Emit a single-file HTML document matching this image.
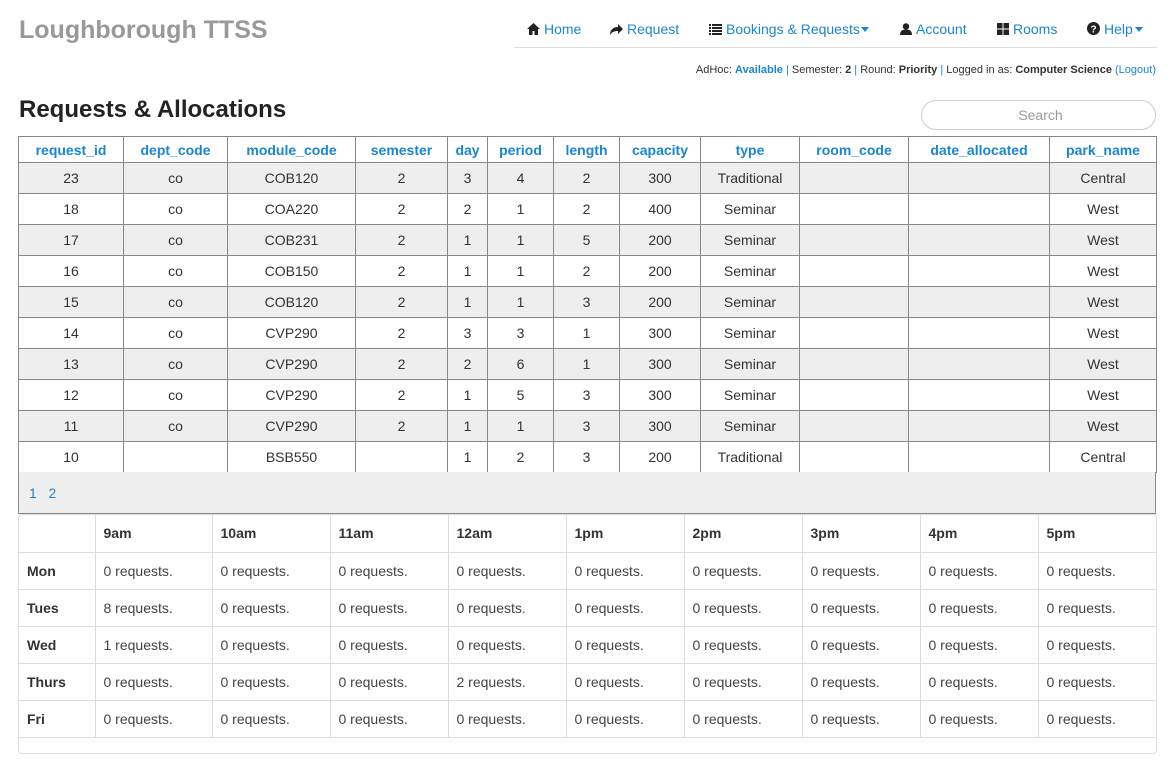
<!DOCTYPE html>
<html><head><meta charset="utf-8"><style>
*{box-sizing:border-box;margin:0;padding:0}
body{width:1173px;height:764px;background:#fff;font-family:"Liberation Sans",sans-serif;font-size:14px;color:#333;position:relative;overflow:hidden}
.brand{position:absolute;left:19px;top:16px;font-size:25px;font-weight:bold;color:#999}
.nav{position:absolute;left:514px;top:0;width:643px;height:48px;border-bottom:1px solid #e0e0e0}
.nav a{position:absolute;top:21px;color:#1a86cf;font-size:14px;text-decoration:none;white-space:nowrap}
.nav svg{vertical-align:-1px;margin-right:4px}
.info{position:absolute;right:17px;top:64px;font-size:11px;color:#333}
.info b{color:#333}.info .bl{color:#1a86cf;font-weight:bold}.info .l{color:#1a86cf}
h1{position:absolute;left:19px;top:96px;font-size:24px;font-weight:bold;color:#222}
.search{position:absolute;left:921px;top:100px;width:235px;height:30px;border:1px solid #ccc;border-radius:15px;color:#999;font-size:14px;line-height:28px;text-align:center;padding-left:4px}
table{border-collapse:collapse;table-layout:fixed;position:absolute;left:18px}
#t1{top:136px;width:1138px}
#t1 td,#t1 th{border:1px solid #888;text-align:center;height:31px;font-size:14px;padding:0}
#t1 th{height:26px;color:#1a86cf;font-weight:bold}
#t1 tr.g td{background:#eee}
.pag{position:absolute;left:18px;top:472px;width:1138px;height:42px;background:#eee;border:1px solid #888;border-top:none;padding:13px 0 0 10px;color:#1a86cf;font-size:14px}
.t2w{position:absolute;left:18px;top:514px;width:1139px;height:240px;border:1px solid #ddd;border-radius:4px;overflow:hidden}
#t2{position:static;width:1138px}
#t2 td,#t2 th{border-right:1px solid #ddd;border-bottom:1px solid #ddd;height:37px;text-align:left;padding:0 0 0 8px;font-size:14px;font-weight:normal;color:#444}
#t2 th{font-weight:bold;color:#333}
#t2 td.d{font-weight:bold;color:#333}
#t2 tr>*:last-child{border-right:none}
</style></head><body>
<div class="brand">Loughborough TTSS</div>
<div class="nav">
<a style="left:13px"><svg width="13" height="12" viewBox="0 0 13 12"><path d="M6.5 0L0 6h2v6h3.5V8h2v4H11V6h2z" fill="#222"/></svg>Home</a>
<a style="left:96px"><svg width="13" height="11" viewBox="0 0 13 11"><path d="M8 0v3C3 3 0 6 0 11c2-3 4-4 8-4v3l5-5z" fill="#222"/></svg>Request</a>
<a style="left:195px"><svg width="13" height="11" viewBox="0 0 13 11" fill="#222"><rect x="0" y="0" width="2" height="2"/><rect x="3" y="0" width="10" height="2"/><rect x="0" y="3" width="2" height="2"/><rect x="3" y="3" width="10" height="2"/><rect x="0" y="6" width="2" height="2"/><rect x="3" y="6" width="10" height="2"/><rect x="0" y="9" width="2" height="2"/><rect x="3" y="9" width="10" height="2"/></svg>Bookings &amp; Requests<svg width="8" height="5" viewBox="0 0 8 5" style="margin-left:1px;vertical-align:2px"><path d="M0 0h8L4 5z" fill="#1a86cf"/></svg></a>
<a style="left:386px"><svg width="12" height="12" viewBox="0 0 12 12"><circle cx="6" cy="3.5" r="3.2" fill="#222"/><path d="M0 12c0-4 2-5.5 6-5.5s6 1.5 6 5.5z" fill="#222"/></svg>Account</a>
<a style="left:483px"><svg width="12" height="12" viewBox="0 0 12 12" fill="#222"><rect width="5.5" height="5.5"/><rect x="6.5" width="5.5" height="5.5"/><rect y="6.5" width="5.5" height="5.5"/><rect x="6.5" y="6.5" width="5.5" height="5.5"/></svg>Rooms</a>
<a style="left:573px"><svg width="13" height="13" viewBox="0 0 13 13"><circle cx="6.5" cy="6.5" r="6.5" fill="#222"/><text x="6.5" y="10.5" font-size="10" font-weight="bold" fill="#fff" text-anchor="middle" font-family="Liberation Sans">?</text></svg>Help<svg width="8" height="5" viewBox="0 0 8 5" style="margin-left:2px;vertical-align:2px"><path d="M0 0h8L4 5z" fill="#1a86cf"/></svg></a>
</div>
<div class="info">AdHoc: <span class="bl">Available</span> <span class="l">|</span> Semester: <b>2</b> <span class="l">|</span> Round: <b>Priority</b> <span class="l">|</span> Logged in as: <b>Computer Science</b> <span class="l">(Logout)</span></div>
<h1>Requests &amp; Allocations</h1>
<div class="search">Search</div>
<table id="t1">
<colgroup><col style="width:105px"><col style="width:104px"><col style="width:128px"><col style="width:92px"><col style="width:40px"><col style="width:66px"><col style="width:66px"><col style="width:81px"><col style="width:99px"><col style="width:109px"><col style="width:141px"><col style="width:107px"></colgroup>
<tr><th>request_id</th><th>dept_code</th><th>module_code</th><th>semester</th><th>day</th><th>period</th><th>length</th><th>capacity</th><th>type</th><th>room_code</th><th>date_allocated</th><th>park_name</th></tr>
<tr class="g"><td>23</td><td>co</td><td>COB120</td><td>2</td><td>3</td><td>4</td><td>2</td><td>300</td><td>Traditional</td><td></td><td></td><td>Central</td></tr>
<tr><td>18</td><td>co</td><td>COA220</td><td>2</td><td>2</td><td>1</td><td>2</td><td>400</td><td>Seminar</td><td></td><td></td><td>West</td></tr>
<tr class="g"><td>17</td><td>co</td><td>COB231</td><td>2</td><td>1</td><td>1</td><td>5</td><td>200</td><td>Seminar</td><td></td><td></td><td>West</td></tr>
<tr><td>16</td><td>co</td><td>COB150</td><td>2</td><td>1</td><td>1</td><td>2</td><td>200</td><td>Seminar</td><td></td><td></td><td>West</td></tr>
<tr class="g"><td>15</td><td>co</td><td>COB120</td><td>2</td><td>1</td><td>1</td><td>3</td><td>200</td><td>Seminar</td><td></td><td></td><td>West</td></tr>
<tr><td>14</td><td>co</td><td>CVP290</td><td>2</td><td>3</td><td>3</td><td>1</td><td>300</td><td>Seminar</td><td></td><td></td><td>West</td></tr>
<tr class="g"><td>13</td><td>co</td><td>CVP290</td><td>2</td><td>2</td><td>6</td><td>1</td><td>300</td><td>Seminar</td><td></td><td></td><td>West</td></tr>
<tr><td>12</td><td>co</td><td>CVP290</td><td>2</td><td>1</td><td>5</td><td>3</td><td>300</td><td>Seminar</td><td></td><td></td><td>West</td></tr>
<tr class="g"><td>11</td><td>co</td><td>CVP290</td><td>2</td><td>1</td><td>1</td><td>3</td><td>300</td><td>Seminar</td><td></td><td></td><td>West</td></tr>
<tr><td>10</td><td></td><td>BSB550</td><td></td><td>1</td><td>2</td><td>3</td><td>200</td><td>Traditional</td><td></td><td></td><td>Central</td></tr>
</table>
<div class="pag">1&nbsp;&nbsp;&nbsp;2</div>
<div class="t2w"><table id="t2">
<colgroup><col style="width:76px"><col style="width:117px"><col style="width:118px"><col style="width:118px"><col style="width:118px"><col style="width:118px"><col style="width:118px"><col style="width:118px"><col style="width:118px"><col style="width:119px"></colgroup>
<tr><th></th><th>9am</th><th>10am</th><th>11am</th><th>12am</th><th>1pm</th><th>2pm</th><th>3pm</th><th>4pm</th><th>5pm</th></tr>
<tr><td class="d">Mon</td><td>0 requests.</td><td>0 requests.</td><td>0 requests.</td><td>0 requests.</td><td>0 requests.</td><td>0 requests.</td><td>0 requests.</td><td>0 requests.</td><td>0 requests.</td></tr>
<tr><td class="d">Tues</td><td>8 requests.</td><td>0 requests.</td><td>0 requests.</td><td>0 requests.</td><td>0 requests.</td><td>0 requests.</td><td>0 requests.</td><td>0 requests.</td><td>0 requests.</td></tr>
<tr><td class="d">Wed</td><td>1 requests.</td><td>0 requests.</td><td>0 requests.</td><td>0 requests.</td><td>0 requests.</td><td>0 requests.</td><td>0 requests.</td><td>0 requests.</td><td>0 requests.</td></tr>
<tr><td class="d">Thurs</td><td>0 requests.</td><td>0 requests.</td><td>0 requests.</td><td>2 requests.</td><td>0 requests.</td><td>0 requests.</td><td>0 requests.</td><td>0 requests.</td><td>0 requests.</td></tr>
<tr><td class="d">Fri</td><td>0 requests.</td><td>0 requests.</td><td>0 requests.</td><td>0 requests.</td><td>0 requests.</td><td>0 requests.</td><td>0 requests.</td><td>0 requests.</td><td>0 requests.</td></tr>
</table></div>
</body></html>
